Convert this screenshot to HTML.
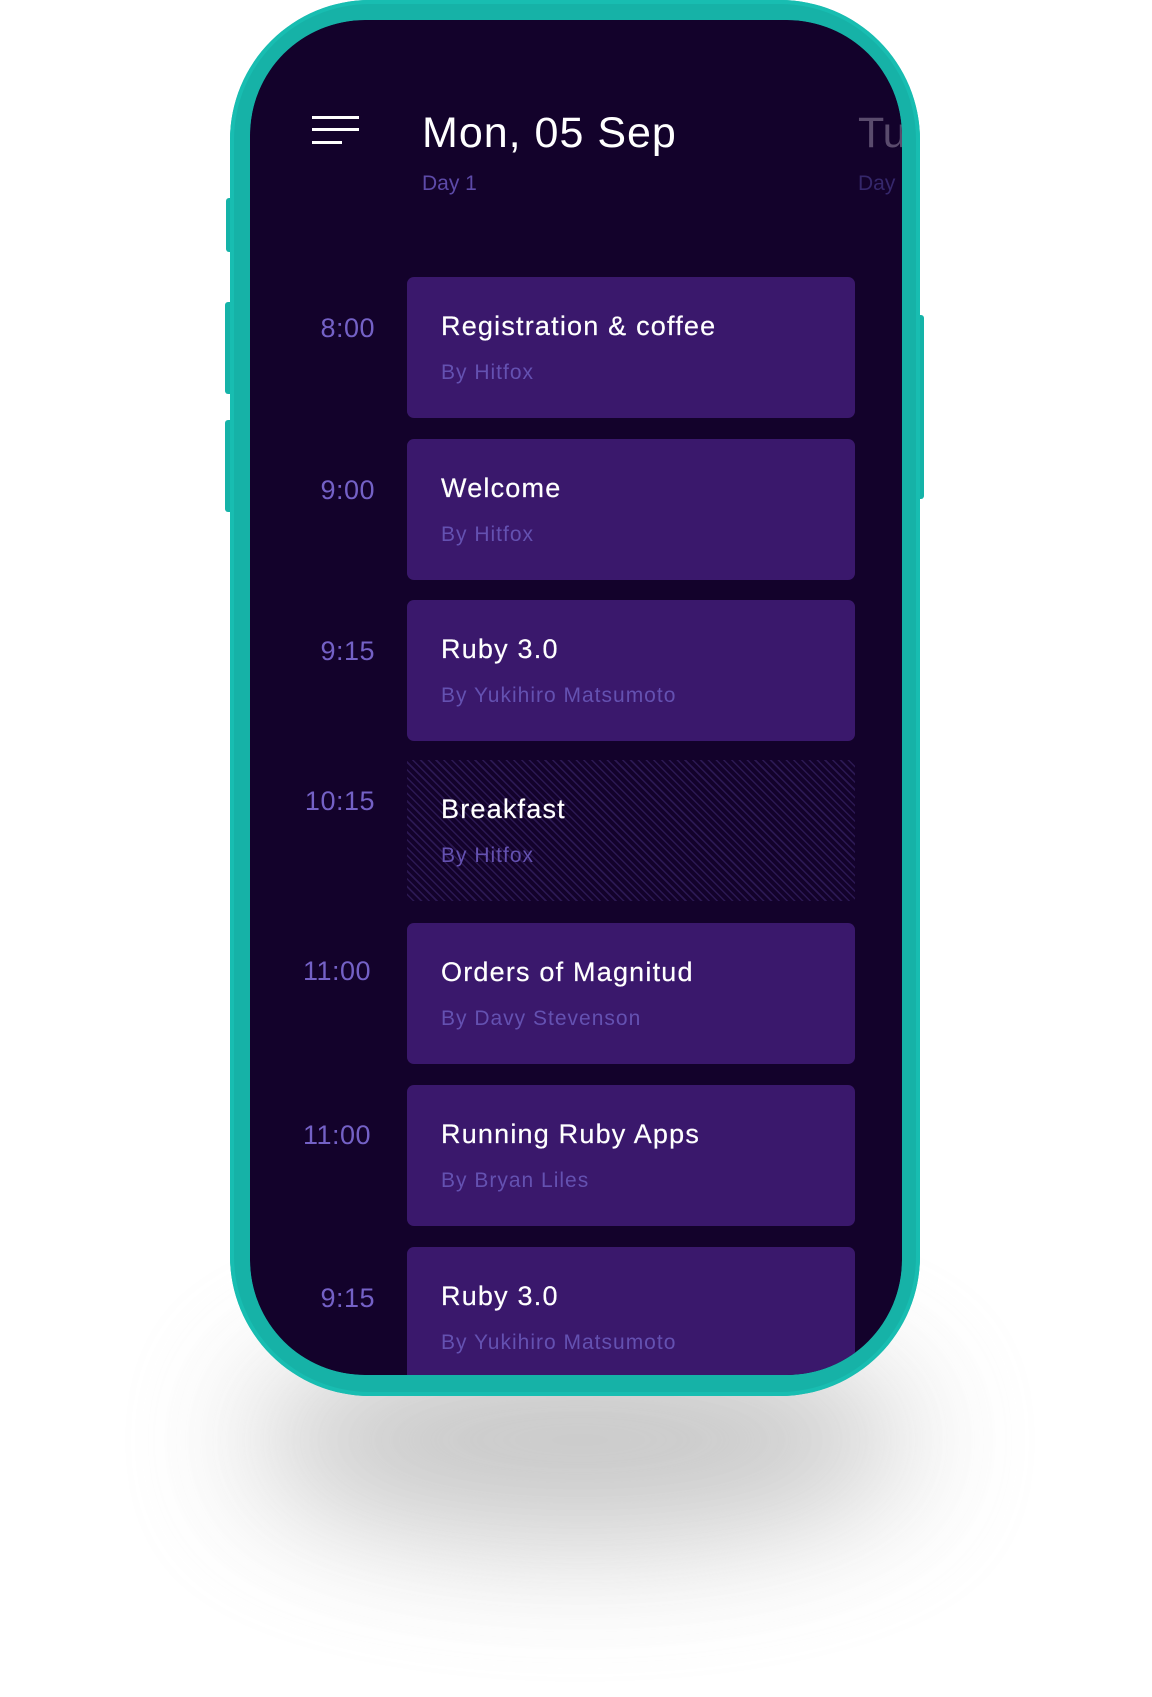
<!DOCTYPE html>
<html><head><meta charset="utf-8">
<style>
*{margin:0;padding:0;box-sizing:border-box}
html,body{width:1152px;height:1697px;background:#fff;overflow:hidden;font-family:"Liberation Sans",sans-serif}
.shadow{position:absolute;left:250px;top:1340px;width:660px;height:200px;border-radius:50%;background:#bcbcbc;filter:blur(65px);opacity:.85}
.btn{position:absolute;background:#15b3a8;border-radius:3px}
.phone{position:absolute;left:230px;top:0;width:690px;height:1396px;border-radius:140px;background:#16b2a7;box-shadow:inset 0 0 0 4px #18bdb1}
.screen{position:absolute;left:250px;top:20px;width:652px;height:1355px;border-radius:115px;background:#13022b;overflow:hidden;clip-path:inset(0 round 115px)}
.hb{position:absolute;left:62px;height:3px;background:#fff}
.title{position:absolute;left:172px;top:89px;color:#fff;font-size:43px;letter-spacing:1px;white-space:nowrap}
.day{position:absolute;left:172px;top:152px;color:#5d4aa8;font-size:21px}
.clipr{position:absolute;left:608px;top:80px;width:44px;height:120px;overflow:hidden}
.tu{position:absolute;left:0;top:9px;color:#5a4b6d;font-size:43px}
.day2{position:absolute;left:0;top:72px;color:#35276b;font-size:21px}
.card{position:absolute;left:157px;width:448px;height:141px;border-radius:7px;background:#3a186c}
.card.st{background:repeating-linear-gradient(45deg,#13022b 0 4px,#2b1852 4px 5.5px);border-radius:0}
.card h3{position:absolute;left:34px;top:34px;color:#fff;font-weight:normal;font-size:27px;letter-spacing:1.2px;white-space:nowrap;-webkit-text-stroke:.2px #fff}
.card p{position:absolute;left:34px;top:84px;color:#6451b1;font-size:21px;letter-spacing:1px;white-space:nowrap}
.time{position:absolute;right:527px;color:#7461c6;font-size:27px;letter-spacing:.5px}
</style></head><body>
<div class="shadow"></div>
<div class="btn" style="left:226px;top:198px;width:8px;height:54px"></div>
<div class="btn" style="left:225px;top:302px;width:8px;height:92px"></div>
<div class="btn" style="left:225px;top:420px;width:8px;height:92px"></div>
<div class="btn" style="left:916px;top:315px;width:8px;height:184px"></div>
<div class="phone"></div>
<div class="screen">
  <div class="hb" style="top:96px;width:47px"></div>
  <div class="hb" style="top:108px;width:47px"></div>
  <div class="hb" style="top:121px;width:30px"></div>
  <div class="title">Mon, 05 Sep</div>
  <div class="day">Day 1</div>
  <div class="clipr"><div class="tu">Tu</div><div class="day2">Day</div></div>

  <div class="time" style="top:293px">8:00</div>
  <div class="card" style="top:257px"><h3>Registration &amp; coffee</h3><p>By Hitfox</p></div>

  <div class="time" style="top:455px">9:00</div>
  <div class="card" style="top:419px"><h3>Welcome</h3><p>By Hitfox</p></div>

  <div class="time" style="top:616px">9:15</div>
  <div class="card" style="top:580px"><h3>Ruby 3.0</h3><p>By Yukihiro Matsumoto</p></div>

  <div class="time" style="top:766px">10:15</div>
  <div class="card st" style="top:740px"><h3>Breakfast</h3><p>By Hitfox</p></div>

  <div class="time" style="top:936px;right:531px">11:00</div>
  <div class="card" style="top:903px"><h3>Orders of Magnitud</h3><p>By Davy Stevenson</p></div>

  <div class="time" style="top:1100px;right:531px">11:00</div>
  <div class="card" style="top:1065px"><h3>Running Ruby Apps</h3><p>By Bryan Liles</p></div>

  <div class="time" style="top:1263px">9:15</div>
  <div class="card" style="top:1227px;height:200px"><h3>Ruby 3.0</h3><p>By Yukihiro Matsumoto</p></div>
</div>
</body></html>
